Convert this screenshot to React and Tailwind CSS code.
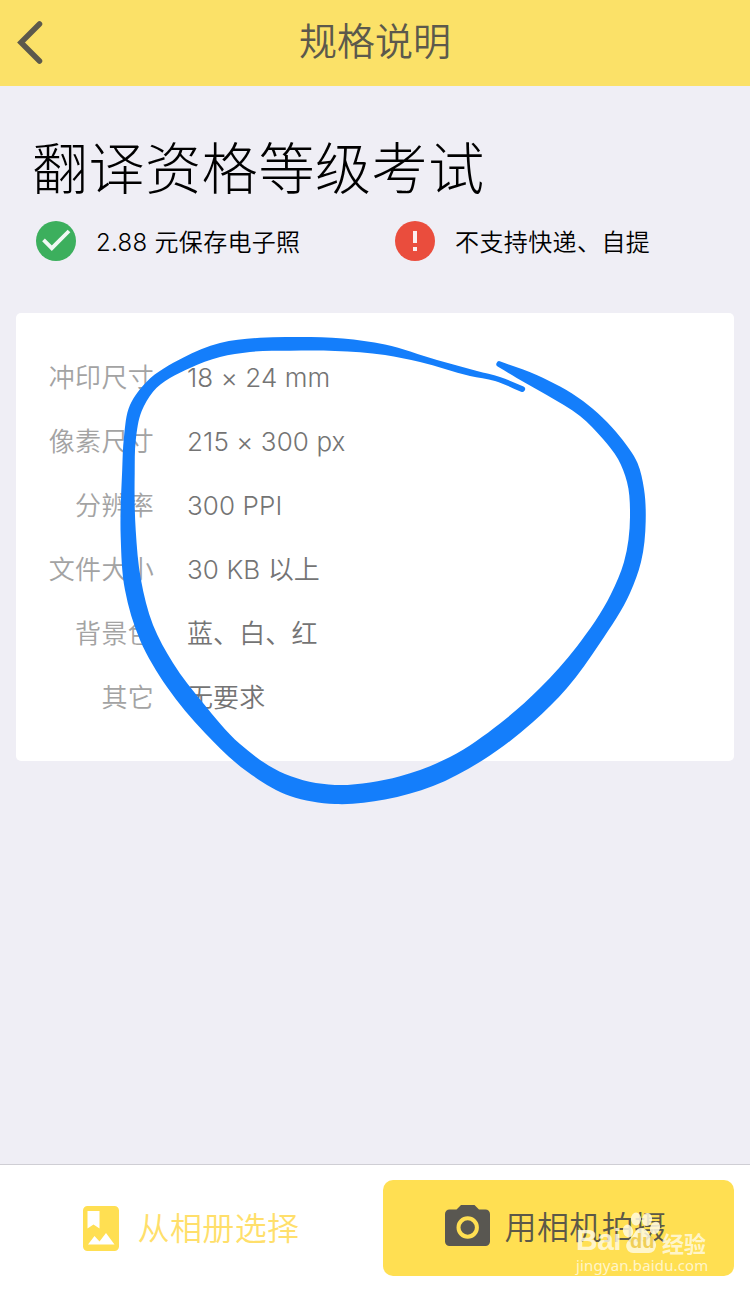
const SPECS = [
  { label: '冲印尺寸', value: '18 × 24 mm' },
  { label: '像素尺寸', value: '215 × 300 px' },
  { label: '分辨率', value: '300 PPI' },
  { label: '文件大小', value: '30 KB 以上' },
  { label: '背景色', value: '蓝、白、红' },
  { label: '其它', value: '无要求' },
];

// points along the two edges of the hand-drawn circle
const OUTER = [
  [500.5, 361.5], [536.7, 375], [583, 401], [620, 436.7], [637.5, 463], [644, 489], [645.7, 521],
  [641, 562], [630, 593], [600, 643], [567, 688], [533, 722], [483, 760], [433, 786],
  [385, 799.5], [335, 804], [290, 796], [247, 771.5], [205, 733], [167, 687], [140, 640],
  [125, 590], [120.7, 537], [122.2, 470], [124, 437], [130, 405], [146.7, 381.7],
  [183, 357.7], [220, 343], [260, 337.7], [300, 337], [343, 338.5], [385, 344.5], [437, 360],
  [477, 371], [500, 377], [523.5, 386.5],
];
const INNER = [
  [521, 391.7], [495, 381], [470, 376], [420, 362], [385, 355], [335, 351], [290, 350.8],
  [250, 352], [220, 357], [190, 368], [153, 391.7], [141.7, 411], [135.8, 440], [134.7, 473],
  [135.7, 530], [141, 580], [153, 625], [173, 663], [203, 703], [240, 744], [285, 774],
  [335, 785], [370, 782.5], [400, 776.3], [450, 757], [500, 723.5], [540, 688], [576.7, 646.7],
  [611, 594], [624, 562], [630, 517], [627, 482], [618, 459], [603, 439], [580, 416],
  [546.7, 395], [516.7, 378], [498, 366.8],
];

// cubic spline through the points, with tangents weighted by the spacing of the neighbours
function curve(points) {
  const last = points.length - 1;
  const dist = (a, b) => Math.hypot(b[0] - a[0], b[1] - a[1]);
  const tangents = points.map((p, i) => {
    const a = points[Math.max(i - 1, 0)];
    const b = points[Math.min(i + 1, last)];
    const da = dist(a, p);
    const db = dist(p, b);
    return [0, 1].map((k) => {
      const va = da ? (p[k] - a[k]) / da : 0;
      const vb = db ? (b[k] - p[k]) / db : 0;
      return (va * db + vb * da) / (da + db) || va + vb;
    });
  });
  return points
    .slice(1)
    .map((p, i) => {
      const prev = points[i];
      const d = dist(prev, p) / 3;
      const c1 = [0, 1].map((k) => (prev[k] + tangents[i][k] * d).toFixed(2));
      const c2 = [0, 1].map((k) => (p[k] - tangents[i + 1][k] * d).toFixed(2));
      return `C${c1} ${c2} ${p}`;
    })
    .join(' ');
}

const CIRCLE_PATH = `M${OUTER[0]} ${curve(OUTER)} A2.8 2.8 0 0 1 ${INNER[0]} ${curve(INNER)} A2.8 2.8 0 0 1 ${OUTER[0]}Z`;

function CheckIcon() {
  return (
    <svg className="h-10 w-10 shrink-0" viewBox="0 0 40 40" fill="none">
      <circle cx="20" cy="20" r="20" fill="#3caf5d" />
      <path d="M7.500 18.800 15.800 27.200 33 10" stroke="#f1f8f4" strokeWidth="3.800" />
    </svg>
  );
}

function AlertIcon() {
  return (
    <svg className="h-10 w-10 shrink-0" viewBox="0 0 40 40">
      <circle cx="20" cy="20" r="20" fill="#ea4d3d" />
      <path d="M18 10h4v12h-4zM18 26h4v4h-4z" fill="#fbeff0" />
    </svg>
  );
}

function AlbumIcon() {
  return (
    <svg className="h-[46px] w-9 shrink-0" viewBox="0 0 36 46">
      <path
        fillRule="evenodd"
        fill="#ffdf52"
        d="M4.500 0h27a4.500 4.500 0 0 1 4.500 4.500v36a4.500 4.500 0 0 1-4.500 4.500h-27a4.500 4.500 0 0 1-4.500-4.500v-36a4.500 4.500 0 0 1 4.500-4.500zM4.500 5v17.500l6-4 6 4V5zM5 38.500h26.500L23 27l-6.500 8.500-5-5.500z"
      />
    </svg>
  );
}

function CameraIcon() {
  return (
    <svg className="mb-[5px] h-[41px] w-[45px] shrink-0" viewBox="0 0 45 41">
      <path
        fill="#595751"
        d="M16 0h13.500l4.500 4.500h6.500a4.500 4.500 0 0 1 4.500 4.500v27.500a4.500 4.500 0 0 1-4.500 4.500h-36a4.500 4.500 0 0 1-4.500-4.500V9a4.500 4.500 0 0 1 4.500-4.500h7z"
      />
      <circle cx="22.700" cy="22.500" r="9.200" fill="none" stroke="#ffdf52" strokeWidth="4" />
    </svg>
  );
}

function Watermark() {
  return (
    <div className="absolute left-[576px] top-[1208px] w-[140px] text-[#fffae0]/85">
      <div className="flex h-[48px] items-end whitespace-nowrap">
        <span className="w-[46px] pb-px font-['Liberation_Sans',sans-serif] text-[30px] font-bold leading-[30px] tracking-[-0.5px]">Bai</span>
        <div className="relative h-[47px] w-[38px]">
          <svg className="h-full w-full" viewBox="0 0 38 47" fill="currentColor">
            <ellipse cx="6" cy="22" rx="5" ry="6.500" transform="rotate(-15 6 22)" />
            <ellipse cx="14" cy="10" rx="5" ry="6.500" />
            <ellipse cx="25" cy="10.500" rx="5" ry="6.500" transform="rotate(10 25 10.500)" />
            <ellipse cx="33" cy="19" rx="4.800" ry="6.500" transform="rotate(20 33 19)" />
            <path d="M19 19c6 0 7 6 11 10 4 3 5 7 3 11-2 5-8 4-14 4-6 0-12 1-14-4-2-4 0-8 4-11 4-4 5-10 10-10z" />
          </svg>
          <span className="absolute left-[8px] top-[21px] font-['Liberation_Sans',sans-serif] text-[20px] font-bold leading-[22px] text-[#f0cf58]">du</span>
        </div>
        <span className="ml-[2px] font-['Noto_Sans_CJK_SC',sans-serif] text-[22px] font-bold leading-[28px]">经验</span>
      </div>
      <div className="font-['Noto_Sans',sans-serif] text-[15px] font-normal leading-[19px] tracking-[0.15px]">jingyan.baidu.com</div>
    </div>
  );
}

export default function App() {
  return (
    <div className="relative flex h-[1292px] w-[750px] flex-col overflow-hidden bg-[#efeef5] font-['Inter','Noto_Sans_CJK_SC',sans-serif] font-[350]">
      <header className="grid h-[86px] grid-cols-[1fr_auto_1fr] items-center bg-[#fbe168] text-[#5c594c]">
        <button type="button" className="mb-[2px] ml-[17px] w-[27px]" aria-label="返回">
          <svg className="h-[43px] w-[27px]" viewBox="0 0 27 43" fill="none" stroke="currentColor" strokeWidth="5.500" strokeLinecap="round">
            <path d="M22.500 3 4 21.500 22.500 40" />
          </svg>
        </button>
        <h1 className="pb-1 text-[38px] leading-[56px]">规格说明</h1>
      </header>

      <main className="flex-1 px-4 pt-[41px]">
        <section className="pl-4">
          <h2 className="h-[81px] whitespace-nowrap text-[56px] font-light leading-[84px] tracking-[0.6px] text-black">翻译资格等级考试</h2>
          <div className="mt-[13px] grid grid-cols-[359px_1fr] pl-1 text-2xl leading-10 tracking-[0.3px] text-black">
            <div className="flex items-center gap-5">
              <CheckIcon />
              <span className="h-9">2.88 元保存电子照</span>
            </div>
            <div className="flex items-center gap-5">
              <AlertIcon />
              <span className="h-9 tracking-[0.4px]">不支持快递、自提</span>
            </div>
          </div>
        </section>

        <dl className="mt-[52px] h-[448px] rounded-[5px] bg-white pt-[33px] text-[26px] leading-[64px]">
          {SPECS.map((s) => (
            <div key={s.label} className="flex gap-[33px]">
              <dt className="w-[138px] text-right tracking-[0.3px] text-[#a3a3a3]">{s.label}</dt>
              <dd className="tracking-[0.1px] text-[#747474]">{s.value}</dd>
            </div>
          ))}
        </dl>
      </main>

      <footer className="flex h-32 border-t border-[#cfced4] bg-white text-[32px] tracking-[0.4px]">
        <button type="button" className="flex w-[383px] items-center justify-center gap-[18px] text-[#ffdf6b]">
          <AlbumIcon />
          <span>从相册选择</span>
        </button>
        <button type="button" className="mt-[15px] flex h-24 w-[351px] items-center justify-center gap-[14px] rounded-[10px] bg-[#ffdf52] pr-[5px] text-[#5c5848]">
          <CameraIcon />
          <span>用相机拍摄</span>
        </button>
      </footer>

      <Watermark />

      <svg className="pointer-events-none absolute inset-0 h-full w-full" viewBox="0 0 750 1292">
        <path d={CIRCLE_PATH} fill="#147efb" />
      </svg>
    </div>
  );
}
